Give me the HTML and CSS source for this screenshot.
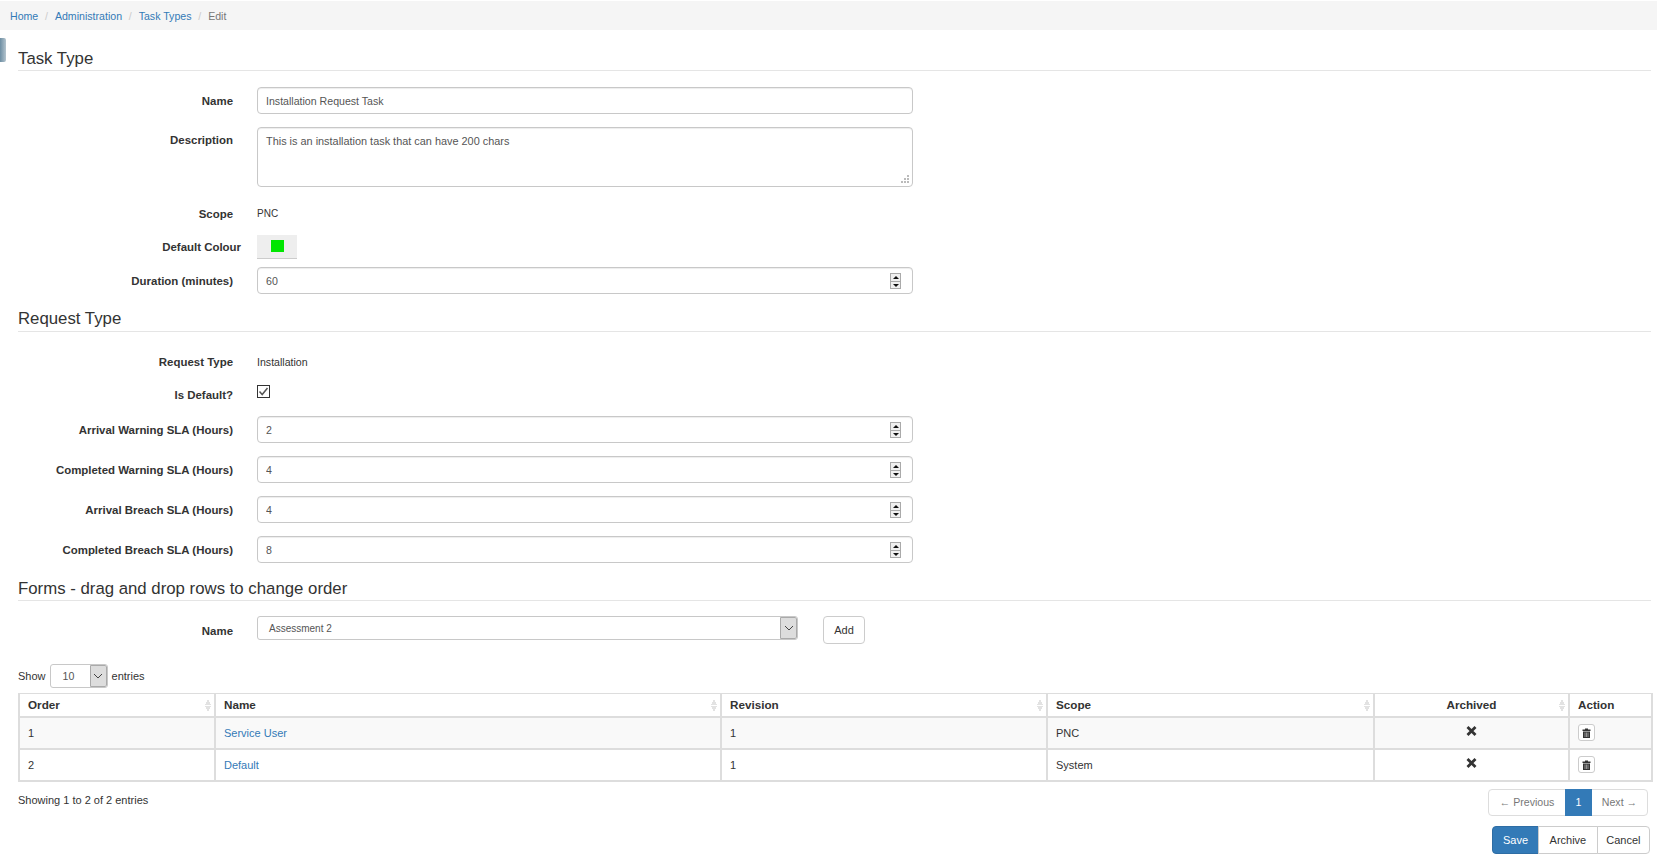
FILE: index.html
```html
<!DOCTYPE html>
<html lang="en">
<head>
<meta charset="utf-8">
<title>Task Type - Edit</title>
<link rel="stylesheet" href="styles.css">
</head>
<body>
<nav class="crumbs">
  <a href="#">Home</a><span class="sep">/</span>
  <a href="#">Administration</a><span class="sep">/</span>
  <a href="#">Task Types</a><span class="sep">/</span>
  <span class="current">Edit</span>
</nav>
<div class="side-tab"></div>
<main class="page">
  <h2 class="section first">Task Type</h2>
  <div class="row r-input"><label class="lbl">Name</label><div class="field"><input class="ctl" type="text" value="Installation Request Task"></div></div>
  <div class="row r-area"><label class="lbl">Description</label><div class="field"><textarea class="ctl area">This is an installation task that can have 200 chars</textarea><svg class="grip" width="9" height="9" viewBox="0 0 9 9"><path d="M7 0h2v2H7zM4 3h2v2H4zM7 3h2v2H7zM1 6h2v2H1zM4 6h2v2H4zM7 6h2v2H7z" fill="#bbb"/></svg></div></div>
  <div class="row r-static"><label class="lbl">Scope</label><div class="static pnc">PNC</div></div>
  <div class="row r-colour"><label class="lbl lbl-wide">Default Colour</label><div class="colour"><span class="swatch"></span></div></div>
  <div class="row r-spin"><label class="lbl">Duration (minutes)</label><div class="field"><input class="ctl" type="text" value="60"><span class="spin"><i class="up"></i><i class="down"></i></span></div></div>

  <h2 class="section">Request Type</h2>
  <div class="row r-static r-req"><label class="lbl">Request Type</label><div class="static">Installation</div></div>
  <div class="row r-check"><label class="lbl">Is Default?</label>
    <svg class="check" width="13" height="13" viewBox="0 0 13 13"><rect x="0.5" y="0.5" width="12" height="12" fill="#fff" stroke="#333"/><path d="M2.5 6.5 L5.2 9.5 L10.5 3" fill="none" stroke="#555" stroke-width="1.5"/></svg>
  </div>
  <div class="row r-sla"><label class="lbl">Arrival Warning SLA (Hours)</label><div class="field"><input class="ctl" type="text" value="2"><span class="spin"><i class="up"></i><i class="down"></i></span></div></div>
  <div class="row r-sla"><label class="lbl">Completed Warning SLA (Hours)</label><div class="field"><input class="ctl" type="text" value="4"><span class="spin"><i class="up"></i><i class="down"></i></span></div></div>
  <div class="row r-sla"><label class="lbl">Arrival Breach SLA (Hours)</label><div class="field"><input class="ctl" type="text" value="4"><span class="spin"><i class="up"></i><i class="down"></i></span></div></div>
  <div class="row r-sla"><label class="lbl">Completed Breach SLA (Hours)</label><div class="field"><input class="ctl" type="text" value="8"><span class="spin"><i class="up"></i><i class="down"></i></span></div></div>

  <h2 class="section forms">Forms - drag and drop rows to change order</h2>
  <div class="row r-add"><label class="lbl">Name</label>
    <div class="select wide"><span class="sel-text">Assessment 2</span><span class="sel-btn"><svg width="10" height="6" viewBox="0 0 10 6"><path d="M1 1 L5 5 L9 1" fill="none" stroke="#444" stroke-width="1"/></svg></span></div>
    <button class="btn add" type="button">Add</button>
  </div>

  <div class="length">Show
    <div class="select small"><span class="sel-text">10</span><span class="sel-btn"><svg width="10" height="6" viewBox="0 0 10 6"><path d="M1 1 L5 5 L9 1" fill="none" stroke="#444" stroke-width="1"/></svg></span></div>
    entries</div>

  <table class="grid">
    <colgroup><col class="c1"><col class="c2"><col class="c3"><col class="c4"><col class="c5"><col class="c6"></colgroup>
    <thead><tr>
      <th class="sort">Order</th><th class="sort">Name</th><th class="sort">Revision</th><th class="sort">Scope</th><th class="sort center">Archived</th><th>Action</th>
    </tr></thead>
    <tbody>
      <tr class="odd"><td>1</td><td><a href="#">Service User</a></td><td>1</td><td>PNC</td><td class="center"><svg class="x" width="11" height="10" viewBox="0 0 11 10"><path d="M1.5 1 L9.5 9 M9.5 1 L1.5 9" stroke="#333" stroke-width="2.8"/></svg></td><td class="act"><button class="trash" type="button"><svg width="9" height="10" viewBox="0 0 9 10"><path d="M3 0.5 h3 v1 h2.5 v1.5 h-8 v-1.5 h2.5z M1 3.5 h7 v6.5 h-7z" fill="#333"/><path d="M3 4.5 v4.5 M4.5 4.5 v4.5 M6 4.5 v4.5" stroke="#bbb" stroke-width="0.7"/></svg></button></td></tr>
      <tr><td>2</td><td><a href="#">Default</a></td><td>1</td><td>System</td><td class="center"><svg class="x" width="11" height="10" viewBox="0 0 11 10"><path d="M1.5 1 L9.5 9 M9.5 1 L1.5 9" stroke="#333" stroke-width="2.8"/></svg></td><td class="act"><button class="trash" type="button"><svg width="9" height="10" viewBox="0 0 9 10"><path d="M3 0.5 h3 v1 h2.5 v1.5 h-8 v-1.5 h2.5z M1 3.5 h7 v6.5 h-7z" fill="#333"/><path d="M3 4.5 v4.5 M4.5 4.5 v4.5 M6 4.5 v4.5" stroke="#bbb" stroke-width="0.7"/></svg></button></td></tr>
    </tbody>
  </table>

  <div class="table-foot">
    <div class="info">Showing 1 to 2 of 2 entries</div>
    <div class="pager"><a class="pg prev" href="#">← Previous</a><a class="pg active" href="#">1</a><a class="pg next" href="#">Next →</a></div>
  </div>
  <div class="actions">
    <button class="btn primary" type="button">Save</button><button class="btn mid" type="button">Archive</button><button class="btn last" type="button">Cancel</button>
  </div>
</main>
</body>
</html>
```
FILE: styles.css
```css
* { box-sizing: border-box; }
html, body { margin: 0; padding: 0; }
body {
  font-family: "Liberation Sans", Arial, sans-serif;
  font-size: 11px;
  color: #333;
  background: #fff;
  position: relative;
  height: 859px;
  overflow: hidden;
}
a { color: #337ab7; text-decoration: none; }

.crumbs {
  margin-top: 1px;
  height: 29px;
  background: #f5f5f5;
  padding: 0 10px;
  display: flex;
  align-items: center;
  font-size: 10.6px;
}
.crumbs .sep { color: #ccc; margin: 0 7px 0 6.7px; }
.crumbs .current { color: #777; }

.side-tab {
  position: absolute;
  left: 0; top: 38px;
  width: 6px; height: 24px;
  border-radius: 0 2px 2px 0;
  background: linear-gradient(to right, #6d8ea3, #b4c4ce);
}

.page { padding: 0 6px 0 18px; }

.section {
  font-weight: 400;
  font-size: 16.8px;
  line-height: 21px;
  margin: 0 0 16px;
  padding-bottom: 3px;
  border-bottom: 1px solid #e5e5e5;
  color: #333;
  height: 24px;
}
.section.first { margin-top: 17px; line-height: 23px; }

.row { display: flex; align-items: flex-start; }
.lbl {
  width: 215px;
  flex: none;
  text-align: right;
  font-weight: 700;
  font-size: 11.45px;
  white-space: nowrap;
  margin-right: 24px;
}
.field { width: 656px; position: relative; flex: none; }
.ctl {
  display: block;
  width: 100%;
  height: 27px;
  border: 1px solid #c8c8c8;
  border-radius: 4px;
  padding: 0 9px 0 8px;
  font: inherit;
  font-size: 10.6px;
  color: #555;
  background: #fff;
  box-shadow: inset 0 1px 1px rgba(0,0,0,.075);
  outline: none;
}
.area { height: 60px; padding: 6px 9px 7px 8px; resize: none; line-height: 1.3; font-size: 10.9px; }
.grip { position: absolute; right: 4px; bottom: 3px; }

.r-input { height: 27px; margin-bottom: 13px; }
.r-input .lbl { padding-top: 8px; line-height: 13px; }
.r-area { margin-bottom: 19px; }
.r-area .lbl { line-height: 13px; padding-top: 7px; }
.r-static { height: 16px; line-height: 16px; margin-bottom: 13px; font-size: 10.6px; }
.pnc { font-size: 10px; }
.r-colour { height: 24px; margin-bottom: 8px; align-items: center; }
.lbl-wide { width: 223px; margin-right: 16px; line-height: 26px; }
.colour {
  width: 40px; height: 24px;
  background: #eee;
  border-bottom: 1px solid #ccc;
  display: flex;
  align-items: center;
  justify-content: center;
}
.swatch { width: 13px; height: 12px; background: #00e600; display: block; margin-top: -1px; }
.r-spin { height: 27px; margin-bottom: 14px; }
.r-spin .lbl, .r-sla .lbl { padding-top: 8px; line-height: 13px; }
.r-req { margin-top: 22px; margin-bottom: 16px; }
.r-check { height: 16px; margin-bottom: 14px; line-height: 18px; }
.check { display: block; margin-top: -1px; }
.r-sla { height: 27px; margin-bottom: 13px; }

.spin {
  position: absolute;
  right: 12px; top: 6px;
  width: 11px; height: 16px;
  border: 1px solid #aaa;
  background: #ddd;
  display: flex;
  flex-direction: column;
}
.spin i { flex: 1; display: block; position: relative; background: #f0f0f0; }
.spin i + i { border-top: 1px solid #aaa; }
.spin i::after {
  content: "";
  position: absolute;
  left: 1.5px;
  width: 0; height: 0;
  border-left: 3px solid transparent;
  border-right: 3px solid transparent;
}
.spin .up::after { top: 2px; border-bottom: 3px solid #111; }
.spin .down::after { top: 2px; border-top: 3px solid #111; }

.section.forms { margin-top: 14px; margin-bottom: 15px; line-height: 23px; }
.r-add { height: 28px; margin-bottom: 20px; }
.r-add .lbl { line-height: 30px; }
.select {
  display: flex;
  border: 1px solid #c8c8c8;
  border-radius: 3px;
  background: #fff;
  height: 24px;
  flex: none;
  overflow: hidden;
}
.select.wide { width: 541px; }
.select.small { width: 58px; margin: 0 4px; }
.sel-text { flex: 1; padding-left: 11px; line-height: 23px; color: #555; font-size: 10px; }
.select.small .sel-text { padding-left: 12px; line-height: 22px; font-size: 10.6px; }
.sel-btn {
  width: 17px;
  background: #ddd;
  border: 1px solid #aaa;
  border-radius: 0 2px 2px 0;
  display: flex;
  align-items: center;
  justify-content: center;
}
.btn {
  font: inherit;
  color: #333;
  background: #fff;
  border: 1px solid #ccc;
  border-radius: 4px;
  height: 28px;
  padding: 0 10.5px;
}
.add { margin-left: 25px; width: 42px; padding: 0; }

.length { display: flex; align-items: center; height: 24px; margin-bottom: 5px; line-height: 26px; }

.grid {
  border-collapse: collapse;
  table-layout: fixed;
  width: 1633px;
  border: 2px solid #ddd;
  border-top: 1px solid #ddd;
}
.c1 { width: 196px; } .c2 { width: 506px; } .c3 { width: 326px; } .c4 { width: 327px; } .c5 { width: 195px; } .c6 { width: 83px; }
.grid th, .grid td {
  border: 2px solid #ddd;
  padding: 0 8px;
  text-align: left;
  position: relative;
}
.grid th { height: 23px; font-weight: 700; font-size: 11.7px; border-top-width: 1px; }
.grid td { height: 32px; }
.grid .center { text-align: center; }
.odd td { background: #f9f9f9; }
.x { display: block; margin: -4px auto 0; }
.sort::after {
  content: "";
  position: absolute;
  right: 3px; top: 5px;
  width: 6px; height: 13px;
  background:
    linear-gradient(to bottom right, transparent 50%, #e2e2e2 50%) left top / 3px 6px no-repeat,
    linear-gradient(to bottom left, transparent 50%, #e2e2e2 50%) right top / 3px 6px no-repeat,
    linear-gradient(to top right, transparent 50%, #e2e2e2 50%) left bottom / 3px 6px no-repeat,
    linear-gradient(to top left, transparent 50%, #e2e2e2 50%) right bottom / 3px 6px no-repeat;
}
.trash {
  width: 17px; height: 17px;
  padding: 0;
  border: 1px solid #ccc;
  border-radius: 3px;
  background: #fff;
  display: flex;
  align-items: center;
  justify-content: center;
}

.table-foot { display: flex; justify-content: space-between; align-items: flex-start; margin-top: 7px; padding-right: 3px; }
.info { line-height: 22px; }
.pager { display: flex; height: 27px; width: 160px; border: 1px solid #ddd; border-radius: 4px; font-size: 10.6px; }
.pg { display: flex; align-items: center; justify-content: center; color: #777; }
.pg.prev { width: 76px; }
.pg.active { width: 27px; background: #337ab7; color: #fff; margin: -1px 0; }
.pg.next { flex: 1; }

.actions { display: flex; justify-content: flex-end; margin-top: 10px; padding-right: 1px; }
.actions .btn { border-radius: 0; margin-left: -1px; }
.actions .btn:first-child { border-radius: 4px 0 0 4px; }
.actions .btn:last-child { border-radius: 0 4px 4px 0; }
.btn.primary { background: #337ab7; border-color: #2e6da4; color: #fff; padding: 0 10px; }
.btn.mid { padding: 0 10.5px; }
.btn.last { padding: 0 8.5px; }
```
